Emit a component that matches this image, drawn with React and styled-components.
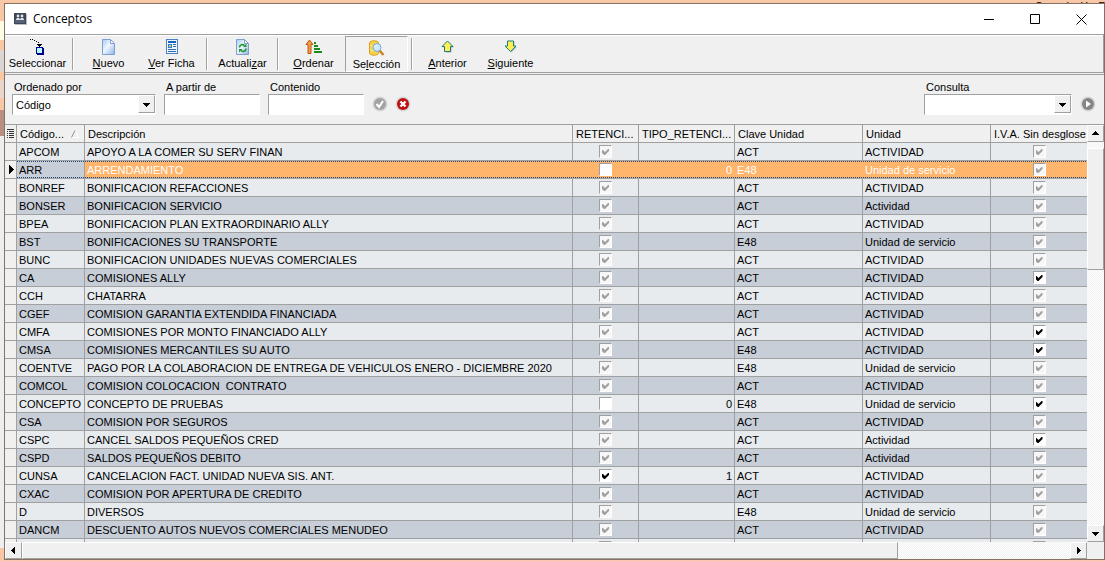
import React from "react"
import styled, { createGlobalStyle, css } from "styled-components"

const COLUMNS = [
  { key: "mark", width: 12 },
  { key: "code", width: 68, label: "Código...", sorted: true },
  { key: "description", label: "Descripción" },
  { key: "retention", width: 66, label: "RETENCI..." },
  { key: "type", width: 96, label: "TIPO_RETENCI..." },
  { key: "unitKey", width: 128, label: "Clave Unidad" },
  { key: "unit", width: 128, label: "Unidad" },
  { key: "iva", width: 96, label: "I.V.A. Sin desglose" }
]

// code, description, retention, type, unit key, unit, iva
// check states: "on", "off" or "null" (greyed)
const ROWS = [
  ["APCOM", "APOYO A LA COMER SU SERV FINAN", "null", "", "ACT", "ACTIVIDAD", "null"],
  ["ARR", "ARRENDAMIENTO", "off", "0", "E48", "Unidad de servicio", "null"],
  ["BONREF", "BONIFICACION REFACCIONES", "null", "", "ACT", "ACTIVIDAD", "null"],
  ["BONSER", "BONIFICACION SERVICIO", "null", "", "ACT", "Actividad", "null"],
  ["BPEA", "BONIFICACION PLAN EXTRAORDINARIO ALLY", "null", "", "ACT", "ACTIVIDAD", "null"],
  ["BST", "BONIFICACIONES SU TRANSPORTE", "null", "", "E48", "Unidad de servicio", "null"],
  ["BUNC", "BONIFICACION UNIDADES NUEVAS COMERCIALES", "null", "", "ACT", "ACTIVIDAD", "null"],
  ["CA", "COMISIONES ALLY", "null", "", "ACT", "ACTIVIDAD", "on"],
  ["CCH", "CHATARRA", "null", "", "ACT", "ACTIVIDAD", "null"],
  ["CGEF", "COMISION GARANTIA EXTENDIDA FINANCIADA", "null", "", "ACT", "ACTIVIDAD", "null"],
  ["CMFA", "COMISIONES POR MONTO FINANCIADO ALLY", "null", "", "ACT", "ACTIVIDAD", "on"],
  ["CMSA", "COMISIONES MERCANTILES SU AUTO", "null", "", "E48", "ACTIVIDAD", "on"],
  ["COENTVE", "PAGO POR LA COLABORACION DE ENTREGA DE VEHICULOS ENERO - DICIEMBRE 2020", "null", "", "E48", "Unidad de servicio", "null"],
  ["COMCOL", "COMISION COLOCACION  CONTRATO", "null", "", "ACT", "ACTIVIDAD", "null"],
  ["CONCEPTO", "CONCEPTO DE PRUEBAS", "off", "0", "E48", "Unidad de servicio", "on"],
  ["CSA", "COMISION POR SEGUROS", "null", "", "ACT", "ACTIVIDAD", "null"],
  ["CSPC", "CANCEL SALDOS PEQUEÑOS CRED", "null", "", "ACT", "Actividad", "on"],
  ["CSPD", "SALDOS PEQUEÑOS DEBITO", "null", "", "ACT", "Actividad", "null"],
  ["CUNSA", "CANCELACION FACT. UNIDAD NUEVA SIS. ANT.", "on", "1", "ACT", "ACTIVIDAD", "null"],
  ["CXAC", "COMISION POR APERTURA DE CREDITO", "null", "", "ACT", "ACTIVIDAD", "null"],
  ["D", "DIVERSOS", "null", "", "E48", "Unidad de servicio", "null"],
  ["DANCM", "DESCUENTO AUTOS NUEVOS COMERCIALES MENUDEO", "null", "", "ACT", "ACTIVIDAD", "null"],
  ["", "", "null", "", "", "", "null"]
]

const SELECTED = 1

const Arrow = ({ d }) => (
  <svg width="9" height="9" viewBox="0 0 9 9" shapeRendering="crispEdges">
    <path d={d} fill="#000" />
  </svg>
)
const UP = "M4 2h1v1h1v1h1v1h1v1H1V5h1V4h1V3h1z"
const DOWN = "M1 3h7v1H7v1H6v1H5v1H4V6H3V5H2V4H1z"
const LEFT = "M6 1v7H5V7H4V6H3V5H2V4h1V3h1V2h1V1z"
const RIGHT = "M3 1v7h1V7h1V6h1V5h1V4H6V3H5V2H4V1z"
const MARK = "M3 0v9h1V8h1V7h1V6h1V5h1V4H7V3H6V2H5V1H4V0z"

const AppIcon = () => (
  <svg width="13" height="12" viewBox="0 0 13 12">
    <rect x="1" y="1" width="12" height="11" fill="#b9bcc2" />
    <rect width="12" height="11" fill="#3d4656" />
    <rect x="1" y="7" width="10" height="3" fill="#566277" />
    <circle cx="4" cy="3" r="1.400" fill="#dfe3ea" />
    <circle cx="8" cy="3" r="1.400" fill="#dfe3ea" />
    <path d="M2 7c0-3 4-3 4 0zM6 7c0-3 4-3 4 0z" fill="#dfe3ea" />
  </svg>
)

const SelectIcon = () => (
  <svg width="16" height="16" viewBox="0 0 16 16" shapeRendering="crispEdges">
    <path d="M0 0h1v1H0zM2 0h1v1H2zM4 1h1v1H4zM6 2h1v1H6zM8 3h1v1H8zM7 5h5v1h-1v1h-1v1H9V7H8V6H7z" fill="#000" />
    <rect x="7" y="9" width="7" height="7" fill="#000080" />
    <rect x="6" y="8" width="7" height="7" fill="#0000a0" />
    <rect x="7" y="9" width="5" height="5" fill="#7ff" />
    <path d="M8 9h1v1H8zM10 9h1v1h-1zM7 10h1v1H7zM9 10h1v1H9zM11 10h1v1h-1zM8 11h1v1H8zM10 11h1v1h-1zM7 12h1v1H7zM9 12h1v1H9zM11 12h1v1h-1zM8 13h1v1H8zM10 13h1v1h-1z" fill="#fff" />
  </svg>
)

const PageShape = () => (
  <>
    <path d="M1.500.5h8l4 4v11h-12z" fill="url(#page)" stroke="#7f9fd0" />
    <path d="M9.500.5v4h4z" fill="#fff" stroke="#7f9fd0" />
  </>
)

const NewIcon = () => (
  <svg width="16" height="16" viewBox="0 0 16 16">
    <defs>
      <linearGradient id="page" x1="0" y1="0" x2="1" y2="1">
        <stop offset="0" stopColor="#a9c9f2" />
        <stop offset=".45" stopColor="#f0f6ff" />
        <stop offset="1" stopColor="#8db4e8" />
      </linearGradient>
    </defs>
    <PageShape />
  </svg>
)

const FileIcon = () => (
  <svg width="16" height="16" viewBox="0 0 16 16" shapeRendering="crispEdges">
    <rect x="2" width="12" height="15" fill="#4a80c4" />
    <rect x="3" y="1" width="10" height="13" fill="#eef5fd" />
    <rect x="4" y="2" width="8" height="2" fill="#1463c0" />
    <rect x="4" y="5" width="4" height="4" fill="#2f7fd0" />
    <rect x="5" y="6" width="2" height="2" fill="#e8c84c" />
    <path d="M9 5h3v1H9zM9 7h3v1H9zM4 10h8v1H4zM4 12h8v1H4z" fill="#2f6db5" />
  </svg>
)

const RefreshIcon = () => (
  <svg width="16" height="16" viewBox="0 0 16 16">
    <PageShape />
    <path d="M4.500 8.500c0-3 3.500-3.500 5-2M11 9.500c0 3-3.500 3.500-5 2" fill="none" stroke="#21962c" strokeWidth="1.600" />
    <path d="M11.500 4.500v3.500H8zM4 13.500V10h3.500z" fill="#21962c" />
  </svg>
)

const SortIcon = () => (
  <svg width="18" height="16" viewBox="0 0 18 16">
    <path d="M4.500 1 8 5.500H6v9H3v-9H1z" fill="#f59a45" stroke="#b85a14" />
    <path d="M9 3h2v2H9zM9 6h4v2H9zM9 9h6v2H9zM9 12h8v2H9z" fill="#1d8a1d" />
  </svg>
)

const SearchIcon = () => (
  <svg width="17" height="16" viewBox="0 0 17 16">
    <path d="M1.500 3c0-3 9-3 9 0v10c0 3-9 3-9 0z" fill="#f8d24e" stroke="#d9a116" />
    <path d="M2 5c2 2 6 2 8 0M2 9c2 2 6 2 8 0" fill="none" stroke="#fff0a0" />
    <path d="m11.500 10.500 4 4.500" stroke="#c98326" strokeWidth="2.500" />
    <circle cx="9" cy="7.500" r="4" fill="#c9ebfc" stroke="#7ba6cf" />
    <path d="M7 7c0-1 1-2 2-2" fill="none" stroke="#fff" />
  </svg>
)

const MoveIcon = ({ down }) => (
  <svg width="14" height="14" viewBox="0 0 14 14">
    <path d={down ? DOWN_PATH : UP_PATH} transform="translate(1 1)" fill="#b8b8b8" />
    <path d={down ? DOWN_PATH : UP_PATH} fill="#ffee55" stroke="#128080" />
  </svg>
)
const UP_PATH = "M6.500 1 12 6.500H9.500v5h-6v-5H1z"
const DOWN_PATH = "M6.500 11.500 12 6H9.500V1h-6v5H1z"

const RoundIcon = ({ kind }) => (
  <svg width="16" height="16" viewBox="0 0 16 16">
    <circle cx="8" cy="8" r="7.500" fill="#d6d6d6" />
    <circle cx="8" cy="8" r="6" fill={{ ok: "#a3a3a3", cancel: "#bd1111", run: "#858585" }[kind]} />
    {kind === "ok" && <path d="m4.500 8 2.500 3 4-6" fill="none" stroke="#fff" strokeWidth="2" />}
    {kind === "cancel" && <path d="m5.500 5.500 5 5M10.500 5.500l-5 5" stroke="#fff" strokeWidth="2.400" />}
    {kind === "run" && <path d="M6 4.500v7L11 8z" fill="#fff" />}
  </svg>
)

const TOOLS = [
  { before: "Seleccionar", icon: <SelectIcon />, split: true },
  { key: "N", after: "uevo", icon: <NewIcon /> },
  { key: "V", after: "er Ficha", icon: <FileIcon />, split: true },
  { before: "Actuali", key: "z", after: "ar", icon: <RefreshIcon />, split: true },
  { key: "O", after: "rdenar", icon: <SortIcon /> },
  { before: "Se", key: "l", after: "ección", icon: <SearchIcon />, pressed: true, split: true },
  { key: "A", after: "nterior", icon: <MoveIcon /> },
  { key: "S", after: "iguiente", icon: <MoveIcon down /> }
]

const ConceptRow = ({ row, selected }) => {
  const [code, description, retention, type, unitKey, unit, iva] = row
  return (
    <Row $selected={selected}>
      <MarkCell>{selected && <Arrow d={MARK} />}</MarkCell>
      <Cell>{code}</Cell>
      <Cell>{description}</Cell>
      <Cell $align="center">
        <Check state={retention} label={`Retención ${code}`} />
      </Cell>
      <Cell $align="right">{type}</Cell>
      <Cell>{unitKey}</Cell>
      <Cell>{unit}</Cell>
      <Cell $align="center">
        <Check state={iva} label={`I.V.A. ${code}`} />
      </Cell>
    </Row>
  )
}

const Check = ({ state, label }) => (
  <CheckInput
    type="checkbox"
    aria-label={label}
    defaultChecked={state !== "off"}
    $grey={state === "null"}
  />
)

const Combo = ({ id, value }) => (
  <ComboBox>
    <select id={id} defaultValue={value}>
      <option value={value}>{value}</option>
    </select>
    <ComboArrow>
      <Arrow d={DOWN} />
    </ComboArrow>
  </ComboBox>
)

export default function App() {
  return (
    <Desktop>
      <GlobalStyle />
      <BackTop>Cancelación F</BackTop>
      <BackLeft>
        <Patch $size={18} $color="#f8c8a6" />
        <Patch $size={19} $color="#fffce6" />
        <Patch $size={10} $color="#f8c8a6" />
        <Patch $size={22} $color="#dcd6d2" />
        <Patch $size={8} $color="#f8c8a6" />
        <Patch $size={18} $color="#e8d6ca" />
        <Patch $size={12} $color="#f8c8a6" />
        <Patch $size={26} $color="#b88f80" />
        <Patch $color="#eeeeee" />
        <Patch $size={12} $color="#f8c8a6" />
      </BackLeft>
      <Window>
        <TitleBar>
          <AppIcon />
          <Title>Conceptos</Title>
          <WindowButton aria-label="Minimizar">
            <svg width="11" height="11"><path d="M0 5.500h10" stroke="#000" /></svg>
          </WindowButton>
          <WindowButton aria-label="Maximizar">
            <svg width="11" height="11"><path d="M.5.5h9v9h-9z" fill="none" stroke="#000" /></svg>
          </WindowButton>
          <WindowButton aria-label="Cerrar">
            <svg width="11" height="11"><path d="m.5.5 10 10M10.500.5l-10 10" stroke="#000" /></svg>
          </WindowButton>
        </TitleBar>
        <Toolbar>
          {TOOLS.map((tool, i) => (
            <React.Fragment key={i}>
              <Tool $pressed={tool.pressed}>
                <ToolIcon>{tool.icon}</ToolIcon>
                <span>
                  {tool.before}
                  {tool.key && <u>{tool.key}</u>}
                  {tool.after}
                </span>
              </Tool>
              {tool.split && <Split />}
            </React.Fragment>
          ))}
        </Toolbar>
        <Filters>
          <Field $width={144}>
            <label htmlFor="order">Ordenado por</label>
            <Combo id="order" value="Código" />
          </Field>
          <Field $width={96}>
            <label htmlFor="from">A partir de</label>
            <TextBox id="from" />
          </Field>
          <Field $width={96}>
            <label htmlFor="content">Contenido</label>
            <TextBox id="content" />
          </Field>
          <RoundButton aria-label="Aplicar"><RoundIcon kind="ok" /></RoundButton>
          <RoundButton aria-label="Cancelar"><RoundIcon kind="cancel" /></RoundButton>
          <Spacer />
          <Field $width={148}>
            <label htmlFor="query">Consulta</label>
            <Combo id="query" value="" />
          </Field>
          <RoundButton aria-label="Ejecutar"><RoundIcon kind="run" /></RoundButton>
        </Filters>
        <Grid>
          <Viewport>
            <Table>
              <colgroup>
                {COLUMNS.map(column => (
                  <Col key={column.key} $width={column.width} />
                ))}
              </colgroup>
              <thead>
                <tr>
                  {COLUMNS.map(column => (
                    <HeaderCell key={column.key}>
                      {column.key === "mark" ? (
                        <svg width="9" height="9" shapeRendering="crispEdges">
                          <path d="M1 0h7v1H1zM1 2h1v1H1zM3 2h5v1H3zM1 4h1v1H1zM3 4h5v1H3zM1 6h1v1H1zM3 6h5v1H3zM1 8h1v1H1zM3 8h5v1H3z" fill="#333" />
                        </svg>
                      ) : (
                        column.label
                      )}
                      {column.sorted && (
                        <SortMark width="8" height="8">
                          <path d="m4 .5 3.500 7H0" fill="none" stroke="#fff" />
                          <path d="M.5 7.500 4 .5" stroke="#909090" />
                        </SortMark>
                      )}
                    </HeaderCell>
                  ))}
                </tr>
              </thead>
              <tbody>
                {ROWS.map((row, i) => (
                  <ConceptRow key={i} row={row} selected={i === SELECTED} />
                ))}
              </tbody>
            </Table>
          </Viewport>
          <ScrollBar $vertical>
            <ScrollButton aria-label="Subir"><Arrow d={UP} /></ScrollButton>
            <Gap $size={6} />
            <Thumb $share={32} />
            <Gap $grow={68} />
            <ScrollButton aria-label="Bajar"><Arrow d={DOWN} /></ScrollButton>
          </ScrollBar>
          <ScrollBar>
            <ScrollButton aria-label="Izquierda"><Arrow d={LEFT} /></ScrollButton>
            <Thumb $share={836} />
            <Gap $grow={164} />
            <ScrollButton aria-label="Derecha"><Arrow d={RIGHT} /></ScrollButton>
          </ScrollBar>
        </Grid>
      </Window>
    </Desktop>
  )
}

const GlobalStyle = createGlobalStyle`
  * { box-sizing: border-box; }
  body { margin: 0; overflow: hidden; }
  button, input, select { font: inherit; color: inherit; margin: 0; }
  svg { display: block; flex: none; }
`
const raised = css`
  background: #f0f0f0;
  border: 1px solid;
  border-color: #fff #a0a0a0 #a0a0a0 #fff;
`
const sunken = css`
  background: #fff;
  border: 1px solid;
  border-color: #a0a0a0 #fff #fff #a0a0a0;
`
const Desktop = styled.div`
  display: grid;
  grid-template-columns: 4px 1fr;
  grid-template-rows: 3px 1fr;
  height: 100vh;
  padding-bottom: 1px;
  background: #f8c8a6;
  font: 11px/14px "Liberation Sans", Arial, sans-serif;
  color: #000;
`
const BackTop = styled.div`
  grid-column: 1 / 3;
  overflow: hidden;
  line-height: 12px;
  text-align: right;
`
const BackLeft = styled.div`
  display: flex;
  flex-direction: column;
  min-height: 0;
  overflow: hidden;
`
const Patch = styled.div`
  flex: ${p => (p.$size ? `0 0 ${p.$size}px` : "1")};
  background: ${p => p.$color};
`
const Window = styled.div`
  min-width: 0;
  min-height: 0;
  display: flex;
  flex-direction: column;
  border: 1px solid #857264;
  background: #f0f0f0;
`
const TitleBar = styled.header`
  display: flex;
  align-items: center;
  height: 30px;
  padding-left: 9px;
  background: #fff;
`
const Title = styled.h1`
  flex: 1;
  margin: 0 0 0 6px;
  font: 12px/16px "Open Sans", "Noto Sans", sans-serif;
`
const WindowButton = styled.button`
  display: flex;
  align-items: center;
  justify-content: center;
  width: 46px;
  height: 28px;
  padding: 0;
  border: 0;
  background: none;
`
const Toolbar = styled.div`
  display: flex;
  height: 39px;
  border: 1px solid #a0a0a0;
  border-left: 0;
  box-shadow: inset 0 1px #fff;
  padding: 1px 0 0 1px;
`
const Tool = styled.button`
  display: flex;
  flex-direction: column;
  align-items: center;
  width: 63px;
  height: 36px;
  padding: 2px 0 0;
  border: 1px solid transparent;
  background: none;
  white-space: nowrap;
  ${p => p.$pressed && css`
    ${sunken}
    background: #f2f2f2;
    padding-top: 3px;
  `}
`
const ToolIcon = styled.span`
  display: flex;
  align-items: center;
  height: 16px;
  margin-bottom: 1px;
`
const Split = styled.span`
  width: 2px;
  height: 32px;
  margin: 2px 3px 0;
  border-left: 1px solid #a0a0a0;
  background: #fff;
`
const Filters = styled.div`
  display: flex;
  align-items: flex-end;
  height: 50px;
  margin-top: 1px;
  padding: 0 1px 9px 7px;
  border-top: 1px solid #a0a0a0;
`
const Field = styled.div`
  width: ${p => p.$width}px;
  margin-right: 8px;
  label {
    display: block;
    padding-left: 2px;
    line-height: 14px;
  }
`
const TextBox = styled.input`
  ${sunken}
  display: block;
  width: 100%;
  height: 21px;
  padding: 0 3px;
`
const ComboBox = styled.div`
  ${sunken}
  display: flex;
  height: 21px;
  select {
    flex: 1;
    min-width: 0;
    padding: 0 3px;
    border: 0;
    background: none;
    appearance: none;
  }
`
const ComboArrow = styled.span`
  ${raised}
  display: flex;
  align-items: center;
  justify-content: center;
  width: 17px;
  height: 18px;
  pointer-events: none;
`
const RoundButton = styled.button`
  width: 23px;
  height: 21px;
  padding: 2px 0 3px;
  border: 0;
  background: none;
`
const Spacer = styled.div`
  flex: 1;
`
const Grid = styled.div`
  flex: 1;
  min-height: 0;
  display: grid;
  grid-template-columns: 1fr 17px;
  grid-template-rows: 1fr 17px;
  border-top: 1px solid #a0a0a0;
`
const Viewport = styled.div`
  min-width: 0;
  min-height: 0;
  overflow: hidden;
`
const Table = styled.table`
  width: 100%;
  table-layout: fixed;
  border-collapse: separate;
  border-spacing: 0;
`
const Col = styled.col`
  ${p => p.$width && `width: ${p.$width}px;`}
`
const line = css`
  height: 18px;
  overflow: hidden;
  white-space: pre;
  border-right: 1px solid #a0a0a0;
  border-bottom: 1px solid #a0a0a0;
  line-height: 14px;
  &:last-child { border-right: 0; }
`
const HeaderCell = styled.th`
  ${line}
  padding: 0 0 0 3px;
  background: #f0f0f0;
  font-weight: normal;
  text-align: left;
  &:first-child { padding-left: 1px; }
`
const SortMark = styled.svg`
  display: inline-block;
  margin-left: 7px;
`
const Cell = styled.td`
  ${line}
  padding: 0 2px;
  text-align: ${p => p.$align || "left"};
`
const MarkCell = styled.td`
  ${line}
  padding: 0 0 0 1px;
  background: #f0f0f0;
`
const Row = styled.tr`
  background: #e7ebee;
  &:nth-child(even) { background: #c7ced8; }
  ${p => p.$selected && css`
    ${Cell} {
      background:
        repeating-linear-gradient(90deg, #1c4a80 0 1px, transparent 1px 2px) top / 100% 1px no-repeat,
        repeating-linear-gradient(90deg, #1c4a80 0 1px, transparent 1px 2px) bottom / 100% 1px no-repeat,
        #ffb56c;
      background-clip: padding-box;
      border-right-color: #ffb56c;
      color: #fff;
    }
    ${Cell}:nth-child(2) {
      background-color: #c7ced8;
      border-right-color: #a0a0a0;
      color: #000;
    }
  `}
`
const CheckInput = styled.input`
  ${sunken}
  appearance: none;
  display: block;
  width: 13px;
  height: 13px;
  margin: 0 auto;
  background: ${p => (p.$grey ? "#f7f7f7" : "#fff")};
  &:checked::before {
    content: "";
    display: block;
    width: 7px;
    height: 7px;
    margin: 2px;
    background: ${p => (p.$grey ? "#a0a0a0" : "#000")};
    clip-path: polygon(0 2px, 1px 2px, 3px 4px, 6px 1px, 7px 1px, 7px 3px, 3px 7px, 2px 7px, 0 5px);
  }
`
const ScrollBar = styled.div`
  display: flex;
  flex-direction: ${p => (p.$vertical ? "column" : "row")};
  min-width: 0;
  background: repeating-conic-gradient(#fff 0 25%, #f0f0f0 0 50%) 0 0 / 2px 2px;
`
const ScrollButton = styled.button`
  ${raised}
  display: flex;
  align-items: center;
  justify-content: center;
  flex: none;
  width: 17px;
  height: 17px;
  padding: 0;
`
const Thumb = styled.div`
  ${raised}
  flex: ${p => p.$share} 0 0;
`
const Gap = styled.div`
  flex: ${p => (p.$size ? "none" : `${p.$grow} 0 0`)};
  ${p => p.$size && `height: ${p.$size}px;`}
`
